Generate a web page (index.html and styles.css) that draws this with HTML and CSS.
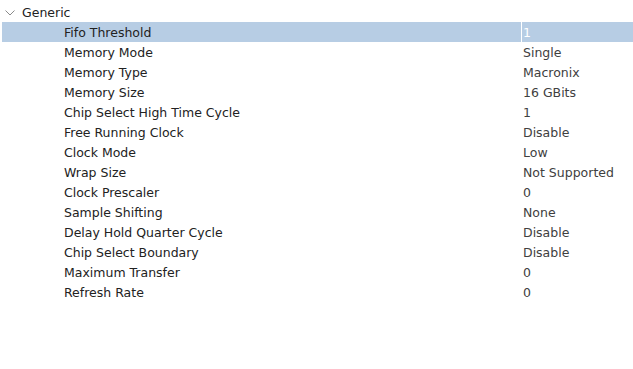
FILE: index.html
```html
<!DOCTYPE html>
<html>
<head>
<meta charset="utf-8">
<link rel="stylesheet" href="styles.css">
</head>
<body>
<div class="tree">
  <div class="group">
    <svg class="chev" width="10" height="6" viewBox="0 0 10 6"><path d="M0.5 0.5 L5 5 L9.5 0.5" fill="none" stroke="#8a8a8a" stroke-width="1"/></svg>
    <span>Generic</span>
  </div>
  <div class="row sel"><span class="label">Fifo Threshold</span><span class="value">1</span></div>
  <div class="row"><span class="label">Memory Mode</span><span class="value">Single</span></div>
  <div class="row"><span class="label">Memory Type</span><span class="value">Macronix</span></div>
  <div class="row"><span class="label">Memory Size</span><span class="value">16 GBits</span></div>
  <div class="row"><span class="label">Chip Select High Time Cycle</span><span class="value">1</span></div>
  <div class="row"><span class="label">Free Running Clock</span><span class="value">Disable</span></div>
  <div class="row"><span class="label">Clock Mode</span><span class="value">Low</span></div>
  <div class="row"><span class="label">Wrap Size</span><span class="value">Not Supported</span></div>
  <div class="row"><span class="label">Clock Prescaler</span><span class="value">0</span></div>
  <div class="row"><span class="label">Sample Shifting</span><span class="value">None</span></div>
  <div class="row"><span class="label">Delay Hold Quarter Cycle</span><span class="value">Disable</span></div>
  <div class="row"><span class="label">Chip Select Boundary</span><span class="value">Disable</span></div>
  <div class="row"><span class="label">Maximum Transfer</span><span class="value">0</span></div>
  <div class="row"><span class="label">Refresh Rate</span><span class="value">0</span></div>
</div>
</body>
</html>
```

FILE: styles.css
```css
html, body {
  margin: 0;
  padding: 0;
  background: #ffffff;
}
body {
  font-family: "DejaVu Sans", "Open Sans", sans-serif;
  font-size: 12.5px;
  color: #222222;
}
.tree {
  padding-top: 2px;
  padding-left: 2px;
}
.group {
  height: 20px;
  box-sizing: border-box;
  padding-top: 2px;
  line-height: 18px;
  display: flex;
  align-items: center;
}
.chev {
  margin-left: 3px;
  margin-right: 7px;
}
.row {
  height: 20px;
  box-sizing: border-box;
  padding-top: 2px;
  line-height: 18px;
  display: flex;
}
.label {
  width: 519px;
  padding-left: 62px;
  box-sizing: border-box;
  flex: none;
}
.value {
  flex: 1;
  margin-top: -2px;
  padding-top: 2px;
  padding-left: 1px;
  border-left: 1px solid transparent;
  color: #404040;
}
.sel {
  background: #b7cde4;
}
.sel .value {
  border-left-color: #ffffff;
  color: #ffffff;
}
```
